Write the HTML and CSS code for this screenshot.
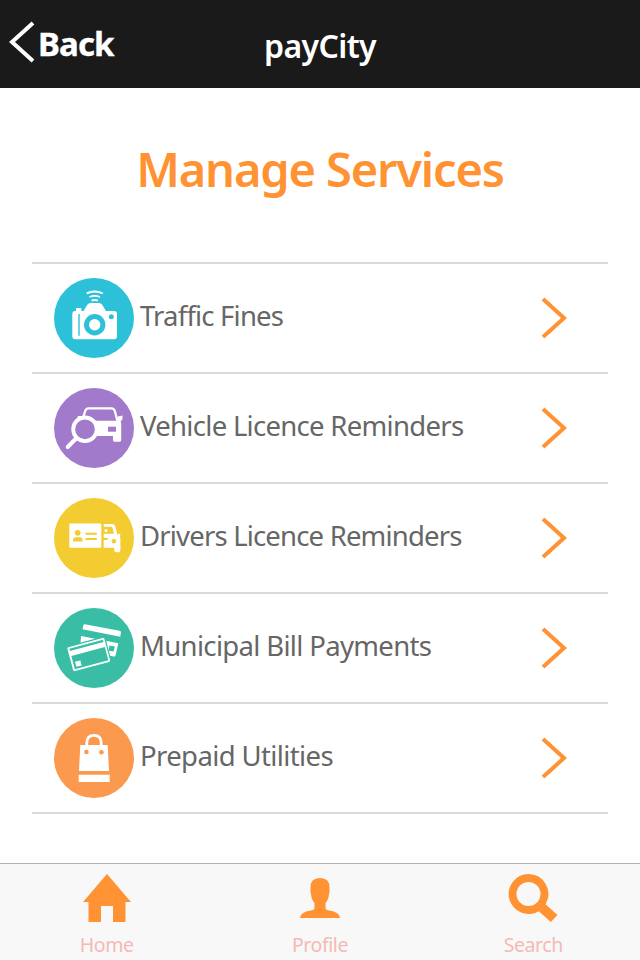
FILE: index.html
```html
<!DOCTYPE html>
<html lang="en">
<head>
<meta charset="utf-8">
<title>payCity</title>
<link rel="stylesheet" href="styles.css">
</head>
<body>
<header class="topbar">
  <a class="back"><svg class="back-icon" width="26" height="42" viewBox="0 0 26 42"><path d="M24 2 3 21l21 19"/></svg><span class="back-label">Back</span></a>
  <div class="brand"><span>payCity</span></div>
</header>
<main class="content">
  <h1 class="title"><span>Manage Services</span></h1>
  <ul class="services">
    <li class="service">
      <svg class="badge" viewBox="0 0 80 80"><circle cx="40" cy="40" r="40" fill="#2dc1d9"/>
        <g fill="#fff"><path d="M22 33v-2q0-1 1-1h3.500q1 0 1 1v2H29.500l4-6.500q1-1.500 3-1.500h8.500q2 0 3 1.500l4 6.500h8q3 0 3 3v22.300q0 3-3 3H21.300q-3 0-3-3V36q0-3 3-3z"/></g>
        <g fill="none" stroke="#fff" stroke-width="1.900"><path d="M32.700 15.300q8-3.700 16 0M35.500 19q5.200-2.300 10.400 0M37.500 22.700q3.200-1.300 6.400 0"/></g>
        <circle cx="40.700" cy="46.700" r="8.200" fill="none" stroke="#2dc1d9" stroke-width="5"/><circle cx="57.300" cy="38.700" r="2.500" fill="#2dc1d9"/><path d="M25 36v21.700" stroke="#2dc1d9" stroke-width="1.400"/></svg>
      <span class="name n1">Traffic Fines</span>
      <svg class="chevron" viewBox="0 0 26 42"><path d="m2 2 21 19L2 40"/></svg>
    </li>
    <li class="service">
      <svg class="badge" viewBox="0 0 80 80"><circle cx="40" cy="40" r="40" fill="#a27acb"/>
        <path d="M28.700 31 31.200 23q.8-2.700 3.300-2.700h23q2.500 0 3.300 2.700L63.500 33" fill="none" stroke="#fff" stroke-width="2.300"/>
        <path d="M24 28h4.500v3l-2 2h-2.500q-1.500-2.500 0-5zM63.800 28.500l4.700-1q.5 3-.5 5h-1.500q.7 2 .7 4V52q0 1.700-1.700 1.700h-5Q59 53.700 59 52v-4H38V32.800h25.500z" fill="#fff"/>
        <path d="M54 38.700h8v5h-8z" fill="#a27acb"/>
        <circle cx="31" cy="41.300" r="11.800" fill="#a27acb" stroke="#fff" stroke-width="3.900"/><path d="m22.500 50-8.800 9" stroke="#fff" stroke-width="4" stroke-linecap="round"/></svg>
      <span class="name n2">Vehicle Licence Reminders</span>
      <svg class="chevron" viewBox="0 0 26 42"><path d="m2 2 21 19L2 40"/></svg>
    </li>
    <li class="service">
      <svg class="badge" viewBox="0 0 80 80"><circle cx="40" cy="40" r="40" fill="#f3cc32"/>
        <rect x="15.300" y="25.500" width="32" height="24.200" rx="1.300" fill="#fff"/>
        <g fill="#f3cc32"><circle cx="23.700" cy="34.800" r="2.900"/><path d="M19 43.500V42q0-2.700 3-2.700h3.500q3 0 3 2.700v1.500zM31.500 34.700h11.300v2H31.500zM31.500 39.900h11.300v2H31.500z"/></g>
        <path d="M49.700 26H58q2.600 0 3.200 2.200L63.500 37l1-1.500 2 .7-.7 2.500q.6.700.6 2.500v11q0 2-2 2h-2.200q-2 0-2-2v-2.400H49.700v-7.500l4-.8v-1.200l-4-.8v-3.700H60l-1.600-6q-.3-1.100-1.500-1.100h-7.200z" fill="#fff"/>
        <circle cx="52" cy="32.500" r="1.500" fill="#fff"/><g fill="#f3cc32"><circle cx="60" cy="43.200" r="2.300"/><path d="M49.700 40.200h4v1.500h-4z"/></g></svg>
      <span class="name n3">Drivers Licence Reminders</span>
      <svg class="chevron" viewBox="0 0 26 42"><path d="m2 2 21 19L2 40"/></svg>
    </li>
    <li class="service">
      <svg class="badge" viewBox="0 0 80 80"><circle cx="40" cy="40" r="40" fill="#39bea5"/>
        <path d="m30.800 16.200 34.700 6.600q1.600.3 1.400 1.800l-.6 4.200-37.800-7.500.8-4q.3-1.400 1.500-1.100zM27 28l37.300 7.300-2.800 12.200q-.3 1.200-1.500 1l-34-6z" fill="#fff"/>
        <path d="m55.500 37.500 5.400.9-1.300 5.200-5-.9z" fill="#39bea5"/>
        <g transform="rotate(-15 34.800 46.500)"><rect x="15" y="33.500" width="39.500" height="26" rx="2" fill="#fff" stroke="#39bea5" stroke-width="1.200"/><path d="M17.500 36h34.700v2.200H17.500zM17.500 43.500h34.700v13.700H17.500z" fill="#39bea5"/><path d="M19.600 50h5.500v5.200h-5.500z" fill="#fff"/></g></svg>
      <span class="name n4">Municipal Bill Payments</span>
      <svg class="chevron" viewBox="0 0 26 42"><path d="m2 2 21 19L2 40"/></svg>
    </li>
    <li class="service">
      <svg class="badge" viewBox="0 0 80 80"><circle cx="40" cy="40" r="40" fill="#fb9a4e"/>
        <path d="M26.300 27h27.400L55 53H25zM24.700 56.700h31V64h-31z" fill="#fff"/><path d="M32.800 33v-8q0-7.700 7.200-7.700t7.200 7.700v8" fill="none" stroke="#fff" stroke-width="2.800"/>
        <g fill="#fb9a4e"><circle cx="32.400" cy="34" r="2.300"/><circle cx="47.400" cy="34.300" r="2.300"/></g></svg>
      <span class="name n5">Prepaid Utilities</span>
      <svg class="chevron" viewBox="0 0 26 42"><path d="m2 2 21 19L2 40"/></svg>
    </li>
  </ul>
</main>
<nav class="tabs">
  <a class="tab"><svg width="48" height="48" viewBox="0 0 48 48"><path d="M24 0 48 28h-5.500v20H30V32H18v16H5.500V28H0z"/></svg><span class="t1">Home</span></a>
  <a class="tab"><svg width="48" height="48" viewBox="0 0 48 48"><path d="M24 4q10 0 9.500 10v4q.2 1-.5 2-.5 6-3.500 9v5q0 2 4 2.500 10 1.500 10.700 7.500H3.800q.7-6 10.700-7.500 4-.5 4-2.500v-5q-3-3-3.500-9-.7-1-.5-2v-4Q14 4 24 4z"/></svg><span class="t2">Profile</span></a>
  <a class="tab"><svg width="50" height="48" viewBox="0 0 50 48"><path fill-rule="evenodd" d="M20.500 0a20 20 0 0 1 17 30.300L49.500 41 42.800 48 30.800 37.200A20 20 0 1 1 20.500 0zm0 8a12 12 0 1 0 0 24 12 12 0 0 0 0-24z"/></svg><span class="t3">Search</span></a>
</nav>
</body>
</html>
```

FILE: styles.css
```css
* { box-sizing: border-box; }
body {
  margin: 0;
  height: 960px;
  display: flex;
  flex-direction: column;
  background: #fff;
  font-family: "Noto Sans", "Open Sans", sans-serif;
  overflow: hidden;
}
.topbar {
  height: 88px;
  flex: none;
  display: grid;
  grid-template-columns: 1fr 120px 1fr;
  background: #1a1a1a;
  color: #fff;
}
.back { display: flex; align-items: flex-start; padding: 21px 0 0 9px; }
.back-icon, .chevron { fill: none; stroke: #fff; stroke-width: 4; }
.back-label { font-weight: 700; font-size: 33px; line-height: 46px; margin-left: 3px; letter-spacing: -0.900px; -webkit-text-stroke: 0.400px #fff; }
.brand { text-align: center; font-weight: 600; font-size: 32px; line-height: 46px; padding-top: 23px; white-space: nowrap; letter-spacing: -0.600px; }
.content { flex: 1; padding: 0 32px; }
.title {
  margin: 0;
  height: 174px;
  padding-top: 48px;
  text-align: center;
  font-size: 47px;
  line-height: 66px;
  font-weight: 600;
  letter-spacing: -1.150px;
  color: #ff9233;
  white-space: nowrap;
}
.services { margin: 0; padding: 0; list-style: none; border-top: 2px solid #dadada; }
.service {
  height: 110px;
  display: flex;
  align-items: center;
  padding: 0 41px 0 22px;
  border-bottom: 2px solid #dadada;
}
.badge { width: 80px; height: 80px; flex: none; }
.name {
  flex: 1;
  margin-left: 6px;
  padding-bottom: 5px;
  font-size: 27.500px;
  line-height: 40px;
  color: #666;
  white-space: nowrap;
}
.n1 { letter-spacing: -0.800px; }
.n2 { letter-spacing: -0.700px; }
.n3 { letter-spacing: -0.820px; }
.n4 { letter-spacing: -0.670px; }
.n5 { letter-spacing: -0.620px; }
.chevron { width: 26px; height: 42px; flex: none; stroke: #ff9233; }
.tabs {
  height: 97px;
  flex: none;
  display: grid;
  grid-template-columns: repeat(3, 1fr);
  background: #f8f8f8;
  border-top: 1px solid #b2b2b2;
}
.tab { display: flex; flex-direction: column; align-items: center; padding-top: 10px; fill: #ff9233; }
.tab span { font-size: 19.500px; line-height: 28px; margin-top: 9px; color: #f6b9b5; letter-spacing: -0.400px; }
```
